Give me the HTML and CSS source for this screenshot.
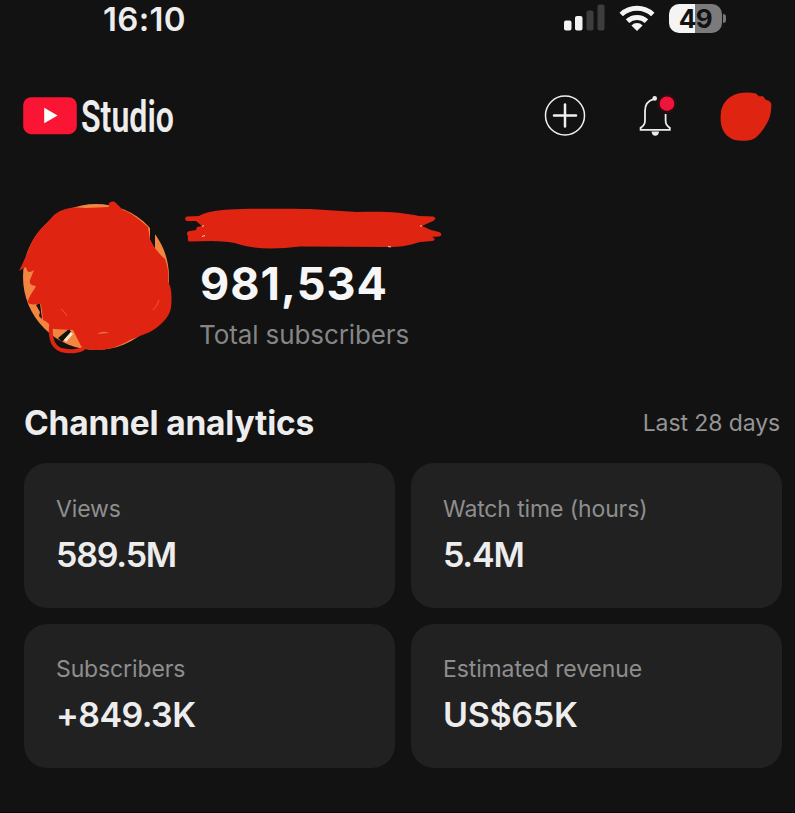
FILE: index.html
```html
<!DOCTYPE html>
<html lang="en">
<head>
<meta charset="utf-8">
<title>Studio</title>
<link rel="stylesheet" href="styles.css">
</head>
<body>
<div class="screen">
  <div class="status">
    <span class="time">16:10</span>
    <div class="indicators">
      <svg class="signal" width="42" height="28" viewBox="0 0 42 28">
        <rect x="0" y="16.5" width="7.5" height="10" rx="2" fill="#f4f4f4"/>
        <rect x="11" y="12" width="7.5" height="14.5" rx="2" fill="#f4f4f4"/>
        <rect x="22.500" y="6.500" width="7" height="20" rx="2" fill="#3d3d3d"/>
        <rect x="33.500" y="0.500" width="7" height="26" rx="2" fill="#3d3d3d"/>
      </svg>
      <svg class="wifi" width="36" height="28" viewBox="0 0 36 28">
        <g fill="none" stroke="#f4f4f4" stroke-width="5">
          <path d="M2.2 10.5a23.3 23.3 0 0 1 31.6 0"/>
          <path d="M8.500 17.2a14 14 0 0 1 19 0"/>
        </g>
        <path d="M18 27l-5.6-5.6a8 8 0 0 1 11.2 0z" fill="#f4f4f4"/>
      </svg>
      <div class="battery-wrap"><div class="battery">49</div><i class="battery-tip"></i></div>
    </div>
  </div>

  <header class="header">
    <svg class="logo" width="54" height="38" viewBox="0 0 54 38">
      <rect x="0.2" y="0.2" width="53.6" height="37" rx="8" fill="#fa1535"/>
      <path d="M21.2 10.800v15.4L34.6 18.500z" fill="#fff"/>
    </svg>
    <span class="brand">Studio</span>
    <svg class="create" width="42" height="42" viewBox="0 0 42 42" fill="none" stroke="#f0f0f0">
      <circle cx="21" cy="20.500" r="19.5" stroke-width="1.5"/>
      <path d="M21 9.500v22M10 20.500h22" stroke-width="2.5" stroke-linecap="round"/>
    </svg>
    <svg class="bell" width="42" height="44" viewBox="0 0 42 44">
      <path d="M27.600 20v6.5c0 3 .7 5.3 4.2 7.3v2.100H2.600v-2.100C6.1 31.800 7 29.500 7 26.500V17C7 10.500 10.800 6.500 15.700 5.200l1-1" fill="none" stroke="#ececec" stroke-width="1.800"/>
      <circle cx="16.700" cy="4.400" r="2.300" fill="#ececec"/>
      <path d="M13.500 37.500h7.600c-.3 2.800-1.700 4.200-3.800 4.200s-3.500-1.400-3.800-4.200z" fill="#ececec"/>
      <circle cx="29" cy="9.700" r="9.800" fill="#3a0b12" opacity=".65"/>
      <circle cx="29" cy="9.700" r="7.300" fill="#ee143a"/>
    </svg>
    <svg class="user" width="52" height="50" viewBox="0 0 52 50">
      <path d="M18 1.500C24 0 30 0 36 1.500l3 2.700 4 .1 3 3.700c4 .5 5.800 2.700 5.300 6.500-.2 6-1.300 12-4.500 17-2.600 4.500-5.800 9.500-9.800 13-4 3.800-9 4.800-15 4.200C14 48.800 7.500 46 3.500 39 .8 34 .2 28.500.8 22 1 12.500 8 4 18 1.500z" fill="#df2412"/>
    </svg>
  </header>

  <section class="channel">
    <svg class="avatar" width="156" height="154" viewBox="17 201 156 154">
      <circle cx="96" cy="277" r="73" fill="#f2853f"/>
      <path d="M43 229l5-7 5 1-6 5zM150 226l5 6v17l-5-9zM36 305l4-2 2 16-3-3 1-4zM58 338l11-9 2 3-9 10z" fill="#15110f"/>
      <path d="M65 341l7-8" stroke="#fbe5ca" stroke-width="3"/>
      <path d="M19 271L27 254C32 240 37 232 44 226L54 215C64 207 76 207 86 208L109 207C107 202 113 200 116 203L123 210C132 213 141 221 148 227L150 240C155 249 160 255 165 259C168 267 169 275 168 282C172 287 172 299 171 308C169 318 160 326 150 332L130 340C118 347 107 350 97 350C90 350 85 349 81 346L73 330L54 329C49 327 51 323 43 320L41 304C35 304 28 306 28 301C30 294 34 291 36 286C32 285 29 285 30 280L34 270C30 273 27 273 26 267L22 269Z" fill="#df2412"/>
      <path d="M51 326c-1 12 2 21 10 24 8 2 21 2 25-4" fill="none" stroke="#df2412" stroke-width="4" stroke-linecap="round"/>
      <path d="M97 334q6-4 12-1z" fill="#e86f3b"/>
      <path d="M153 310q5-5 6-10M61 309q4 3 6 7" fill="none" stroke="#ef5638" stroke-width="1"/>
    </svg>
    <div class="channel-info">
      <svg class="name" width="258" height="41" viewBox="184 208 258 41">
        <path d="M187 216.500L199 216C206 212 217 210 230 209.500C252 208.500 285 208.500 310 209L357 212C382 211 403 212 419 216L433 216.500C437 218 435 220 433 221L422 226L431 230L439 232C442 233 442 236 439 236.500L431 237C436 237 435 241 432 241L420 242C408 246 400 247 389 247L300 246.500C278 249 257 250 238 244C230 241 220 242 212 241L190 241.500C187 242 188 238 188 236C186 234 187 231 190 231L196 230L197 227L202 226L196 221L187 221C184 220 185 217 187 216.500Z" fill="#df2412"/>
        <path d="M202 226.500l2-1M202 236.500l3-1M420 226.500l2-1M388 246.500l3 .5" stroke="#ffc8ba" stroke-width="1"/>
      </svg>
      <div class="count">981,534</div>
      <div class="count-label">Total subscribers</div>
    </div>
  </section>

  <div class="section-head">
    <h2>Channel analytics</h2>
    <span class="period">Last 28 days</span>
  </div>

  <main class="cards">
    <div class="card"><div class="label">Views</div><div class="value tight">589.5M</div></div>
    <div class="card"><div class="label">Watch time (hours)</div><div class="value tight">5.4M</div></div>
    <div class="card"><div class="label">Subscribers</div><div class="value">+849.3K</div></div>
    <div class="card"><div class="label">Estimated revenue</div><div class="value currency">US$65K</div></div>
  </main>
</div>
</body>
</html>
```
FILE: styles.css
```css
* { box-sizing: border-box; }
body {
  margin: 0;
  background: #121212;
  color: #ededed;
  font-family: Inter, "Liberation Sans", sans-serif;
}
.screen {
  width: 795px;
  height: 813px;
  overflow: hidden;
  border-bottom: 1px solid #000;
}
svg { display: block; flex: none; }

.status {
  display: flex;
  justify-content: space-between;
  align-items: center;
  height: 38px;
  padding: 0 69px 0 103px;
}
.time { font-size: 33px; font-weight: 600; line-height: 38px; letter-spacing: .3px; }
.indicators { display: flex; align-items: center; height: 36px; }
.signal { margin-right: 13px; margin-top: -2px; }
.wifi { margin-right: 14px; margin-top: -3px; }
.battery-wrap { display: flex; align-items: center; gap: 1px; margin-top: -2px; }
.battery {
  width: 53px;
  height: 29px;
  border-radius: 10px;
  background: linear-gradient(90deg, #f4f4f4 49%, #7b7b7b 49%);
  color: #121212;
  font-size: 26px;
  font-weight: 700;
  line-height: 29px;
  text-align: center;
  letter-spacing: -.5px;
}
.battery-tip { width: 3px; height: 9px; border-radius: 0 3px 3px 0; background: #777; }

.header { display: flex; align-items: center; height: 156px; padding: 0 23px; }
.brand {
  width: 92px;
  margin: 2px 0 0 4px;
  font-family: Roboto, sans-serif;
  font-size: 44px;
  font-weight: 600;
  line-height: 50px;
  transform: scaleX(.73);
  transform-origin: left center;
}
.create { margin-left: auto; }
.bell { margin-left: 52px; }
.user { margin: 2px 0 0 40px; }

.channel { display: flex; height: 204px; padding: 7px 0 0 17px; }
.channel-info { padding-top: 7px; margin-left: 11px; }
.count { margin: 8px 0 0 16px; color: #f6f6f6; font-size: 45px; font-weight: 650; line-height: 54px; letter-spacing: 1px; }
.count-label { margin: 8px 0 0 15px; color: #858585; font-size: 26px; line-height: 32px; letter-spacing: -.1px; }

.section-head {
  display: flex;
  justify-content: space-between;
  align-items: center;
  height: 50px;
  padding: 0 15px 0 24px;
}
h2 { margin: 0; font-size: 33.500px; font-weight: 650; line-height: 50px; letter-spacing: -.2px; white-space: nowrap; }
.period { color: #959595; font-size: 23px; letter-spacing: -.1px; }

.cards {
  display: grid;
  grid-template-columns: 371px 371px;
  grid-auto-rows: 144.500px;
  gap: 16px;
  margin-top: 15px;
  padding-left: 24px;
}
.card { padding: 31.500px 32px; border-radius: 23px; background: #212121; }
.label { color: #8e8e8e; font-size: 23px; line-height: 28px; letter-spacing: -.12px; }
.value { margin-top: 12px; font-size: 34px; font-weight: 600; line-height: 40px; letter-spacing: -.6px; }
.value.tight { letter-spacing: -1.200px; }
.value.currency { letter-spacing: -.3px; }
```
